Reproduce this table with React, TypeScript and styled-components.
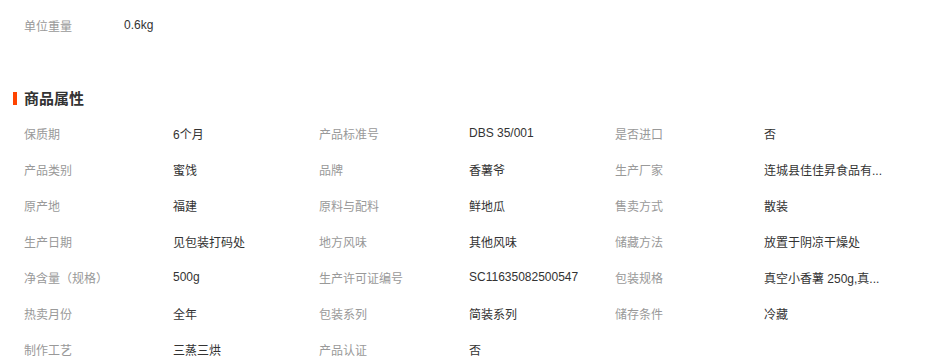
import { Fragment } from "react";
import styled, { createGlobalStyle } from "styled-components";

const GlobalStyle = createGlobalStyle`
  body {
    margin: 0;
    background: #fff;
    font-family: "Liberation Sans", "Noto Sans CJK SC", sans-serif;
    font-size: 12px;
  }
`;

const Page = styled.div`
  padding: 7px 0 0 24px;
`;

const TopRow = styled.div`
  display: flex;
  height: 36px;
  align-items: center;
`;

const TopLabel = styled.span`
  width: 100px;
  color: #999;
`;

const Value = styled.span`
  color: #333;
  white-space: nowrap;
`;

const Heading = styled.h3`
  position: relative;
  margin: 44px 0 4px;
  height: 24px;
  line-height: 24px;
  font-size: 15px;
  font-weight: bold;
  color: #333;

  &::before {
    content: "";
    position: absolute;
    left: -11px;
    top: 5px;
    width: 4px;
    height: 13px;
    background: #ff4400;
  }
`;

const Grid = styled.div`
  display: grid;
  grid-template-columns: 149px 146px 150px 146px 149px 150px;
  grid-auto-rows: 36px;
  align-items: center;
`;

const Label = styled.span`
  color: #999;
  white-space: nowrap;
`;

const attrs: [string, string][] = [
  ["保质期", "6个月"],
  ["产品标准号", "DBS 35/001"],
  ["是否进口", "否"],
  ["产品类别", "蜜饯"],
  ["品牌", "香薯爷"],
  ["生产厂家", "连城县佳佳昇食品有..."],
  ["原产地", "福建"],
  ["原料与配料", "鲜地瓜"],
  ["售卖方式", "散装"],
  ["生产日期", "见包装打码处"],
  ["地方风味", "其他风味"],
  ["储藏方法", "放置于阴凉干燥处"],
  ["净含量（规格）", "500g"],
  ["生产许可证编号", "SC11635082500547"],
  ["包装规格", "真空小香薯 250g,真..."],
  ["热卖月份", "全年"],
  ["包装系列", "简装系列"],
  ["储存条件", "冷藏"],
  ["制作工艺", "三蒸三烘"],
  ["产品认证", "否"],
];

export default function App() {
  return (
    <Page>
      <GlobalStyle />
      <TopRow>
        <TopLabel>单位重量</TopLabel>
        <Value>0.6kg</Value>
      </TopRow>
      <Heading>商品属性</Heading>
      <Grid>
        {attrs.map(([label, value]) => (
          <Fragment key={label}>
            <Label>{label}</Label>
            <Value>{value}</Value>
          </Fragment>
        ))}
      </Grid>
    </Page>
  );
}
